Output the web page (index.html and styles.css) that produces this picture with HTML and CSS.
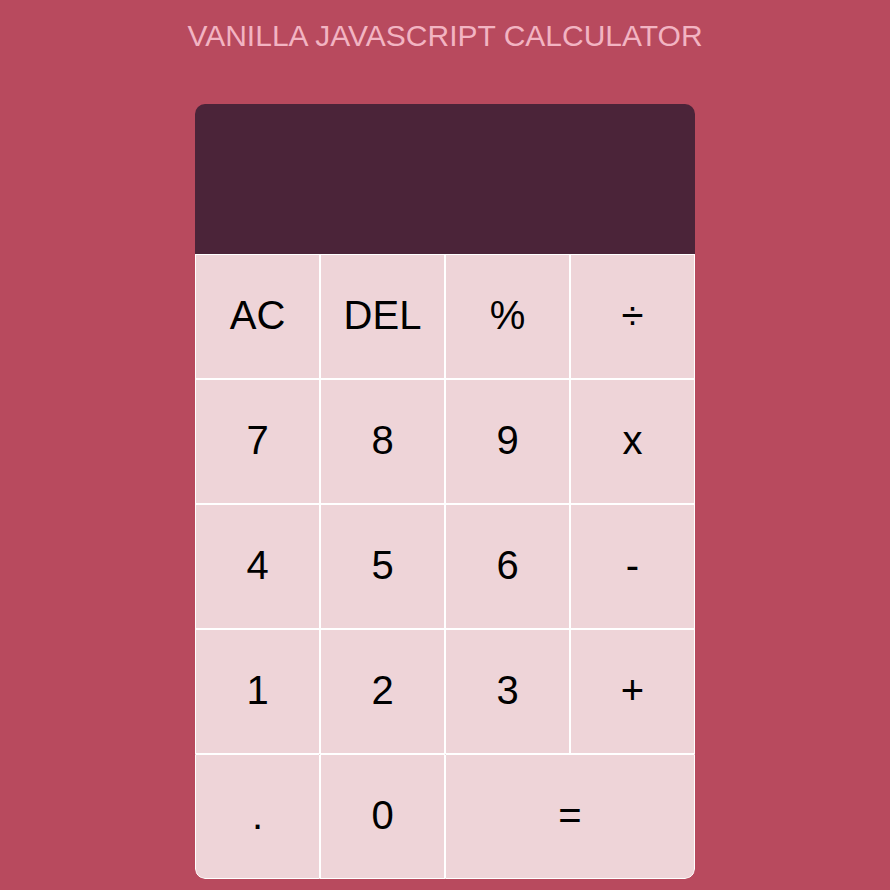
FILE: index.html
```html
<!DOCTYPE html>
<html>
<head>
<meta charset="utf-8">
<link rel="stylesheet" href="styles.css">
</head>
<body>
<h1 class="title">VANILLA JAVASCRIPT CALCULATOR</h1>
<div class="calculator">
  <div class="display"></div>
  <div class="keys">
    <button class="key">AC</button>
    <button class="key">DEL</button>
    <button class="key">%</button>
    <button class="key">÷</button>
    <button class="key">7</button>
    <button class="key">8</button>
    <button class="key">9</button>
    <button class="key">x</button>
    <button class="key">4</button>
    <button class="key">5</button>
    <button class="key">6</button>
    <button class="key">-</button>
    <button class="key">1</button>
    <button class="key">2</button>
    <button class="key">3</button>
    <button class="key">+</button>
    <button class="key key-bl">.</button>
    <button class="key">0</button>
    <button class="key key-wide key-br">=</button>
  </div>
</div>
</body>
</html>
```
FILE: styles.css
```css
html, body {
  margin: 0;
  padding: 0;
}
body {
  background: #b84a5e;
  font-family: "Liberation Sans", Arial, sans-serif;
  display: flex;
  flex-direction: column;
  align-items: center;
  min-height: 890px;
}
.title {
  margin: 20px 0 0;
  font-size: 30px;
  font-weight: normal;
  line-height: 32px;
  color: #f2b4c2;
}
.calculator {
  margin-top: 52px;
  width: 500px;
  border-radius: 10px;
  overflow: hidden;
}
.display {
  height: 150px;
  background: #4b2439;
}
.keys {
  display: grid;
  grid-template-columns: repeat(4, 125px);
  grid-auto-rows: 125px;
}
.key {
  margin: 0;
  padding: 0 0 4px;
  border: 1px solid #ffffff;
  background: #eed4d8;
  color: #000;
  font-family: "Liberation Sans", Arial, sans-serif;
  font-size: 40px;
  line-height: 1;
}
.key-wide {
  grid-column: span 2;
}
.key-bl {
  border-bottom-left-radius: 10px;
}
.key-br {
  border-bottom-right-radius: 10px;
}
```
